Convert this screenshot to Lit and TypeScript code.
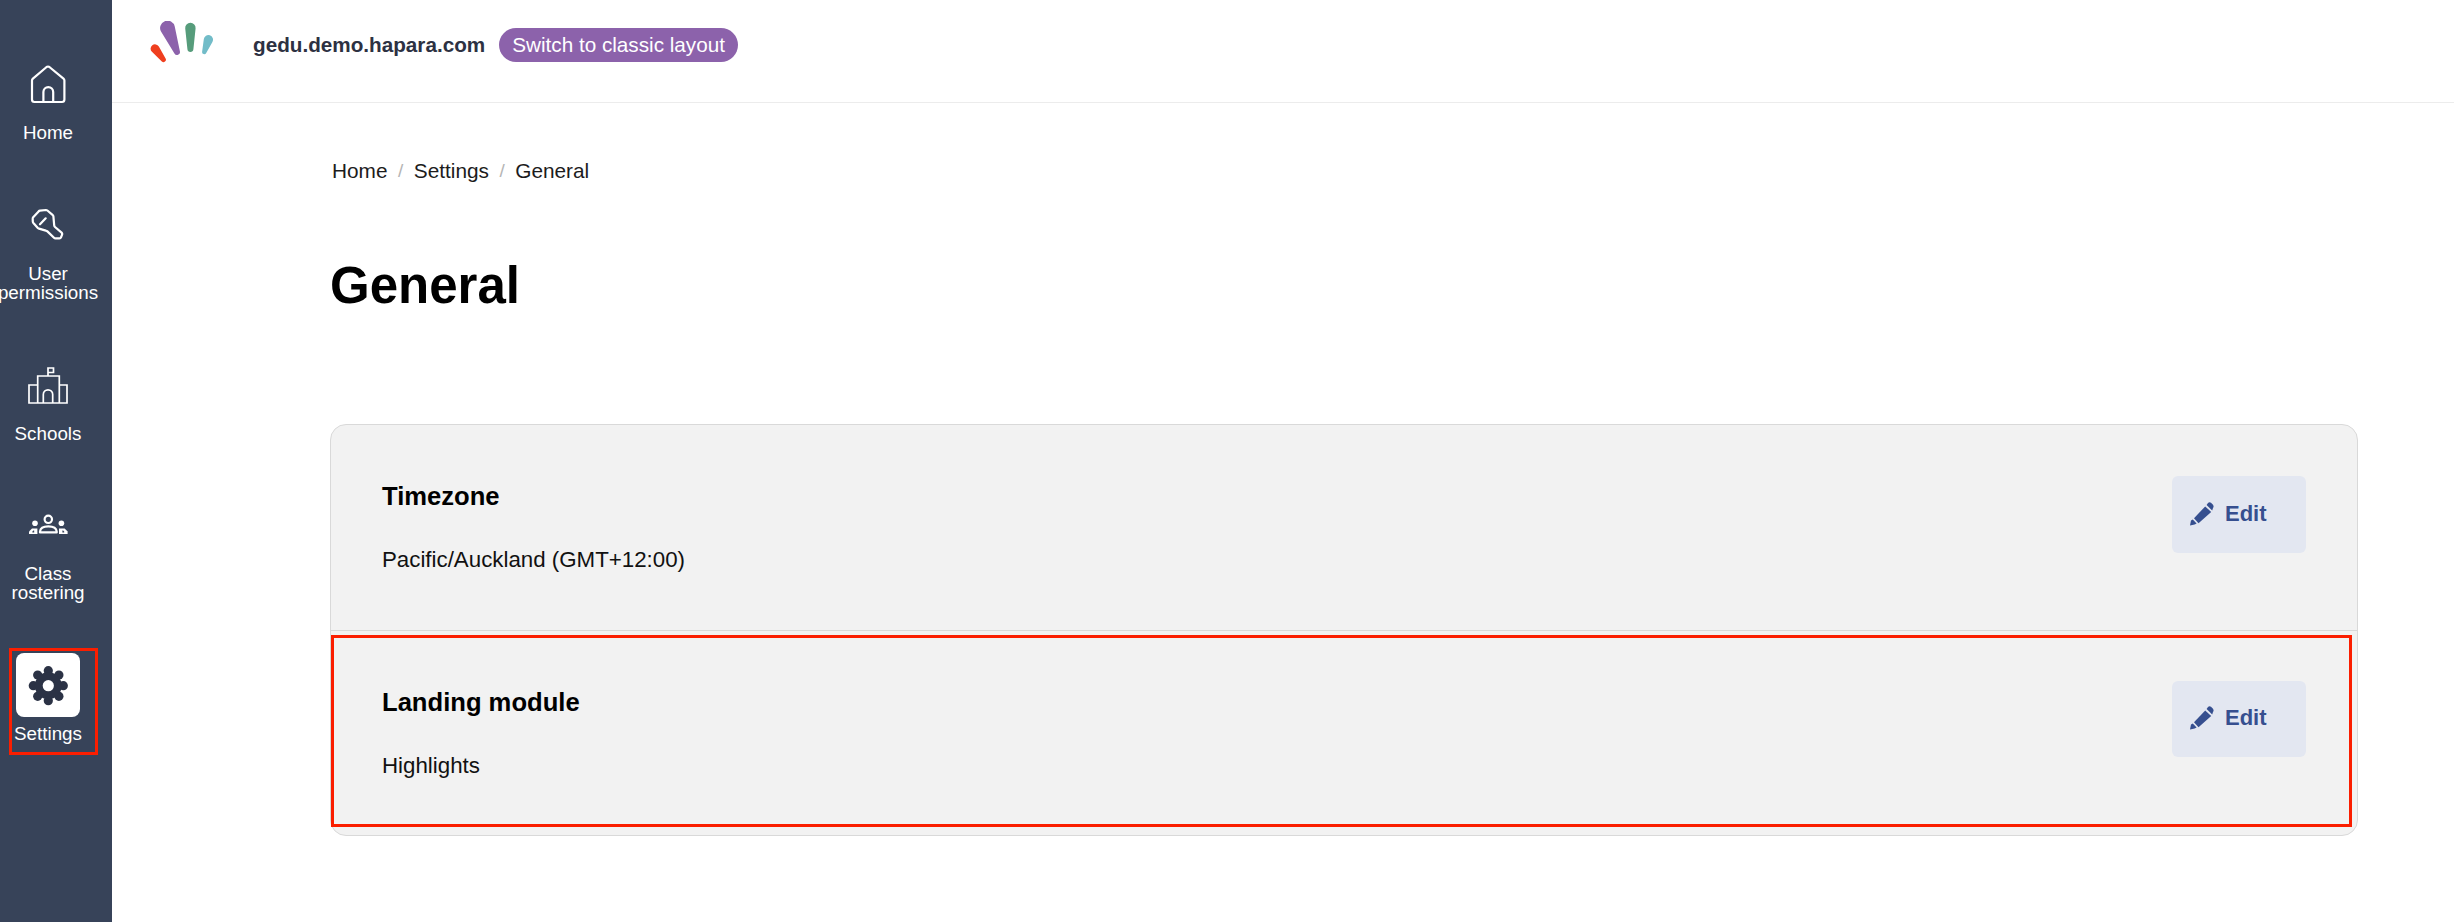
import { LitElement, html, css, svg } from "lit";
import { customElement } from "lit/decorators.js";

function drop(x1: number, y1: number, r1: number, x2: number, y2: number, r2: number) {
  const dx = x2 - x1, dy = y2 - y1, d = Math.hypot(dx, dy);
  const a = Math.atan2(dy, dx), b = Math.acos((r1 - r2) / d);
  const p = (x: number, y: number, r: number, t: number) =>
    `${(x + r * Math.cos(t)).toFixed(2)} ${(y + r * Math.sin(t)).toFixed(2)}`;
  return `M${p(x1, y1, r1, a + b)} A${r1} ${r1} 0 1 1 ${p(x1, y1, r1, a - b)} L${p(x2, y2, r2, a - b)} A${r2} ${r2} 0 0 1 ${p(x2, y2, r2, a + b)} Z`;
}

const iconHome = svg`<path d="M30.6 15 Q32 14 33.4 15 L47.5 26.6 Q48.4 27.4 48.4 28.6 V47.5 Q48.4 50 46 50 H18.4 Q16 50 16 47.5 V28.6 Q16 27.4 16.9 26.6 Z" /><path d="M27.4 50 V40 A4.9 4.9 0 0 1 37.2 40 V50" />`;
const iconKey = svg`<path d="M16.7 26 Q16.6 25 17.2 24.2 L22.6 18.4 Q23.2 17.8 24 17.7 L30 17 Q30.8 17 31.4 17.5 L36.8 22.2 Q37.3 22.7 37.4 23.4 L38.2 32.4 Q38.3 33.4 39 34 L45.6 39.6 Q46.4 40.4 46.2 41.4 L45 44.4 Q44.6 45.4 43.4 45.4 L39.4 45.4 Q38.6 45.4 38 44.8 L31.4 38.4 Q30.8 37.8 29.8 37.6 L23 35.6 Q22.2 35.4 21.6 34.8 L17.4 30 Q16.9 29.4 16.8 28.6 Z" /><path d="M24 31.3 L29.7 25.3" />`;
const iconSchool = svg`<path d="M13 47 V29 H21.7 V47 Z M21.7 47 V20 H43.3 V47 M43.3 29 H51 V47 H13 M27.3 47 V38.5 A4.7 4.7 0 0 1 36.7 38.5 V47 M32 20 V12 H37.5 V16.5 H32" />`;

@customElement("app-root")
export class AppRoot extends LitElement {
  static styles = css`
    :host { display: block; height: 100vh; font-family: "Liberation Sans", Arial, sans-serif; background: #fff; overflow: hidden; }
    .page { display: flex; height: 100%; }
    .side { width: 112px; flex: none; background: #374359; display: flex; flex-direction: column; align-items: flex-start; padding-top: 52px; box-sizing: border-box; }
    .nav { width: 96px; display: flex; flex-direction: column; align-items: center; color: #fff; font-size: 18.8px; line-height: 19px; position: relative; }
    .nav:nth-child(1) { margin-bottom: 51px; }
    .nav:nth-child(2) { margin-bottom: 54px; }
    .nav:nth-child(3) { margin-bottom: 52px; }
    .nav:nth-child(4) { margin-bottom: 51px; }
    .tile { width: 64px; height: 64px; border-radius: 8px; margin-bottom: 7px; display: flex; }
    .nav:nth-child(3) .tile { margin-bottom: 4px; }
    .nav:nth-child(4) .tile { margin-bottom: 5px; }
    .tile svg { width: 64px; height: 64px; fill: none; stroke: #fff; stroke-width: 2.2; stroke-linejoin: round; stroke-linecap: round; }
    .tile.thin svg { stroke-width: 1.7; stroke-linejoin: miter; }
    .tile svg .solid { fill: #fff; stroke: none; }
    .tile svg .cut { fill: #374359; stroke: none; }
    .nav.active .tile { background: #fff; }
    .label { white-space: nowrap; text-align: center; }
    .mark { position: absolute; left: 9px; top: -5px; width: 89px; height: 107px; border: 3px solid #fb1e00; box-sizing: border-box; pointer-events: none; }
    .main { flex: 1; min-width: 0; display: flex; flex-direction: column; }
    .top { height: 103px; box-sizing: border-box; border-bottom: 1.5px solid #ececec; display: flex; align-items: center; padding: 0 0 13px 38px; }
    .logo { width: 64px; height: 42px; flex: none; margin-right: 39px; margin-top: -6px; }
    .domain { font-size: 20.7px; font-weight: 700; color: #2d3142; margin-right: 14px; }
    .pill { height: 34px; box-sizing: border-box; padding: 0 13px; display: flex; align-items: center; border-radius: 17px; background: #8c62ab; color: #fff; font-size: 20.7px; }
    .content { padding: 55px 96px 0 218px; display: flex; flex-direction: column; }
    .crumbs { display: flex; align-items: center; font-size: 20.8px; line-height: 26px; color: #1c1c1c; padding-left: 2px; }
    .sep { color: #b5b5b5; margin: 0 10.5px; font-size: 19px; }
    h1 { margin: 72px 0 0; font-size: 51px; line-height: 60px; font-weight: 700; color: #000; }
    .card { margin-top: 108px; border: 1.5px solid #d9d9d9; border-radius: 16px; background: #f2f2f2; position: relative; }
    .row { display: flex; justify-content: space-between; align-items: flex-start; padding: 51px 51px 0 51px; height: 205px; box-sizing: border-box; position: relative; }
    .row + .row { border-top: 1.5px solid #d9d9d9; }
    .info { display: flex; flex-direction: column; padding-top: 4px; }
    .name { font-size: 25.6px; line-height: 32px; font-weight: 700; color: #000; margin-bottom: 34px; }
    .value { font-size: 22.3px; line-height: 28px; color: #111; }
    .btn { width: 134px; height: 77px; box-sizing: border-box; border-radius: 6px; background: #e3e7f1; display: flex; align-items: center; padding: 0 0 2px 18px; gap: 11px; color: #364f8f; font-size: 22px; font-weight: 700; }
    .row + .row .btn { height: 76px; padding-bottom: 3px; margin-top: -1px; }
    .btn svg { width: 24px; height: 24px; fill: #364f8f; flex: none; }
    .mark2 { position: absolute; left: 0; top: 4px; right: 5px; bottom: 8px; border: 3px solid #fb1e00; pointer-events: none; }
  `;

  nav(icon: unknown, label: unknown, thin = false) {
    return html`<div class="nav">
      <div class="tile ${thin ? "thin" : ""}"><svg viewBox="0 0 64 64">${icon}</svg></div>
      <div class="label">${label}</div>
    </div>`;
  }

  edit() {
    return html`<div class="btn">
      <svg viewBox="0 0 24 24">
        <path d="M15.2 4.4 L21.2 10 L8.5 21.2 L4 16.2 Z" />
        <path d="M16.6 3 L18 1 Q19.4 -0.2 21 0.8 L23 2.8 Q24.2 4.6 23 6 L22.2 8.6 Z" />
        <path d="M1 18.5 L2.8 17.6 L6.6 21.6 L4.6 22.4 L0 23.4 Z" />
      </svg>
      Edit
    </div>`;
  }

  render() {
    const people = svg`
      <circle cx="32.3" cy="24.3" r="3.7" />
      <path d="M24 37.4 V36.5 Q24.5 31.4 32.3 31.4 Q40.2 31.4 40.7 36.5 V37.4 Z" />
      <circle class="solid" cx="19" cy="28.3" r="2.8" />
      <circle class="solid" cx="45.4" cy="28.3" r="2.8" />
      <path class="solid" d="M13 39 V36.6 L16 33.4 H21.4 V39 Z" />
      <path class="cut" d="M16.4 37.6 V36.4 L17.4 35.6 H18.2 V37.6 Z" />
      <path class="solid" d="M51.6 39 V36.6 L48.6 33.4 H43 V39 Z" />
      <path class="cut" d="M48.2 37.6 V36.4 L47.2 35.6 H46.4 V37.6 Z" />`;
    const lobes = [0, 1, 2, 3, 4, 5, 6, 7].map((i) => {
      const t = (i * Math.PI) / 4;
      return svg`<circle cx=${32.3 + 15 * Math.cos(t)} cy=${32.7 + 15 * Math.sin(t)} r="4.6" fill="#2b3245" />`;
    });
    return html`<div class="page">
      <aside class="side">
        ${this.nav(iconHome, "Home")}
        ${this.nav(iconKey, html`User<br />permissions`)}
        ${this.nav(iconSchool, "Schools", true)}
        ${this.nav(people, html`Class<br />rostering`)}
        <div class="nav active">
          <div class="tile">
            <svg viewBox="0 0 64 64" style="stroke:none">
              ${lobes}
              <circle cx="32.3" cy="32.7" r="13.4" fill="#2b3245" />
              <circle cx="32.3" cy="32.7" r="5.6" fill="#fff" />
            </svg>
          </div>
          <div class="label">Settings</div>
          <div class="mark"></div>
        </div>
      </aside>
      <div class="main">
        <header class="top">
          <svg class="logo" viewBox="0 0 64 42">
            <path fill="#8c62ab" d=${drop(17.5, 7, 7.4, 27, 31, 3)} />
            <path fill="#569c7b" d=${drop(40.4, 7, 5.2, 40.4, 28, 3)} />
            <path fill="#72bcc8" d=${drop(58.4, 18.7, 4.6, 54.3, 31, 2.2)} />
            <path fill="#ef3f1f" d=${drop(5, 27.7, 4.4, 13.5, 38.7, 2.4)} />
          </svg>
          <span class="domain">gedu.demo.hapara.com</span>
          <span class="pill">Switch to classic layout</span>
        </header>
        <div class="content">
          <nav class="crumbs"><span>Home</span><span class="sep">/</span><span>Settings</span><span class="sep">/</span><span>General</span></nav>
          <h1>General</h1>
          <section class="card">
            <div class="row">
              <div class="info"><div class="name">Timezone</div><div class="value">Pacific/Auckland (GMT+12:00)</div></div>
              ${this.edit()}
            </div>
            <div class="row">
              <div class="info"><div class="name">Landing module</div><div class="value">Highlights</div></div>
              ${this.edit()}
              <div class="mark2"></div>
            </div>
          </section>
        </div>
      </div>
    </div>`;
  }
}
